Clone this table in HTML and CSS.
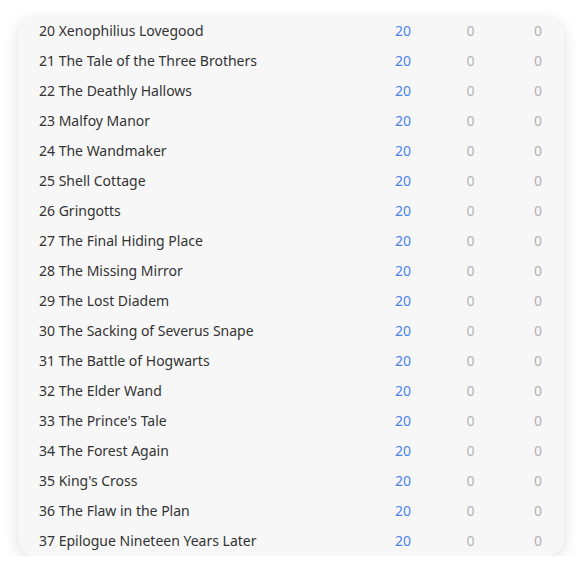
FILE: index.html
```html
<!DOCTYPE html>
<html lang="en">
<head>
<meta charset="utf-8">
<title>Chapters</title>
<link rel="stylesheet" href="styles.css">
</head>
<body>
<div class="card">
  <div class="list">
    <div class="row"><span class="title">20 Xenophilius Lovegood</span><span class="num blue">20</span><span class="num gray">0</span><span class="num gray">0</span></div>
    <div class="row"><span class="title">21 The Tale of the Three Brothers</span><span class="num blue">20</span><span class="num gray">0</span><span class="num gray">0</span></div>
    <div class="row"><span class="title">22 The Deathly Hallows</span><span class="num blue">20</span><span class="num gray">0</span><span class="num gray">0</span></div>
    <div class="row"><span class="title">23 Malfoy Manor</span><span class="num blue">20</span><span class="num gray">0</span><span class="num gray">0</span></div>
    <div class="row"><span class="title">24 The Wandmaker</span><span class="num blue">20</span><span class="num gray">0</span><span class="num gray">0</span></div>
    <div class="row"><span class="title">25 Shell Cottage</span><span class="num blue">20</span><span class="num gray">0</span><span class="num gray">0</span></div>
    <div class="row"><span class="title">26 Gringotts</span><span class="num blue">20</span><span class="num gray">0</span><span class="num gray">0</span></div>
    <div class="row"><span class="title">27 The Final Hiding Place</span><span class="num blue">20</span><span class="num gray">0</span><span class="num gray">0</span></div>
    <div class="row"><span class="title">28 The Missing Mirror</span><span class="num blue">20</span><span class="num gray">0</span><span class="num gray">0</span></div>
    <div class="row"><span class="title">29 The Lost Diadem</span><span class="num blue">20</span><span class="num gray">0</span><span class="num gray">0</span></div>
    <div class="row"><span class="title">30 The Sacking of Severus Snape</span><span class="num blue">20</span><span class="num gray">0</span><span class="num gray">0</span></div>
    <div class="row"><span class="title">31 The Battle of Hogwarts</span><span class="num blue">20</span><span class="num gray">0</span><span class="num gray">0</span></div>
    <div class="row"><span class="title">32 The Elder Wand</span><span class="num blue">20</span><span class="num gray">0</span><span class="num gray">0</span></div>
    <div class="row"><span class="title">33 The Prince's Tale</span><span class="num blue">20</span><span class="num gray">0</span><span class="num gray">0</span></div>
    <div class="row"><span class="title">34 The Forest Again</span><span class="num blue">20</span><span class="num gray">0</span><span class="num gray">0</span></div>
    <div class="row"><span class="title">35 King's Cross</span><span class="num blue">20</span><span class="num gray">0</span><span class="num gray">0</span></div>
    <div class="row"><span class="title">36 The Flaw in the Plan</span><span class="num blue">20</span><span class="num gray">0</span><span class="num gray">0</span></div>
    <div class="row"><span class="title">37 Epilogue Nineteen Years Later</span><span class="num blue">20</span><span class="num gray">0</span><span class="num gray">0</span></div>
  </div>
</div>
</body>
</html>
```
FILE: styles.css
```css
html, body {
  margin: 0;
  padding: 0;
  background: #ffffff;
}
body {
  padding: 18px 18px 0 18px;
  font-family: "Noto Sans", "Open Sans", sans-serif;
  font-size: 14px;
}
.card {
  width: 546px;
  height: 538px;
  background: #f7f7f7;
  border-radius: 16px;
  box-shadow: 0 3px 16px rgba(0, 0, 0, 0.12), 0 0 2px rgba(0, 0, 0, 0.06);
  overflow: hidden;
}
.list {
  margin-top: -3px;
}
.row {
  display: grid;
  grid-template-columns: 1fr 40px 40px 40px;
  column-gap: 27.5px;
  align-items: center;
  height: 30px;
  padding: 0 6px 0 21px;
}
.title {
  color: #333333;
  white-space: nowrap;
}
.num {
  text-align: center;
}
.blue {
  color: #4a83ee;
}
.gray {
  color: #b3b3b3;
}
```
